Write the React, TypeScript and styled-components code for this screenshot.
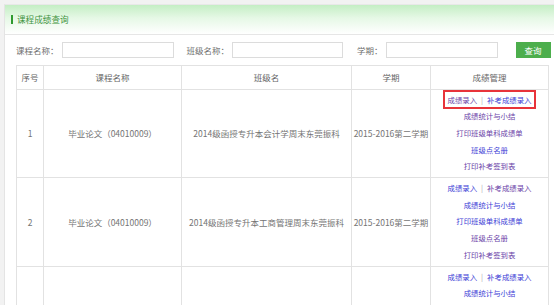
import React from 'react';
import styled, {createGlobalStyle} from 'styled-components';

const GlobalStyle = createGlobalStyle`
  html, body {
    margin: 0;
    padding: 0;
    background: #f2f2f2;
    overflow: hidden;
  }
  body {
    font-family: "Noto Sans CJK SC", "Noto Sans", sans-serif;
    color: #666;
  }
`;

interface IRow {
  no: number;
  course: string;
  klass: string;
  term: string;
}

const ROWS: IRow[] = [
  {no: 1, course: '毕业论文（04010009）', klass: '2014级函授专升本会计学周末东莞振科', term: '2015-2016第二学期'},
  {no: 2, course: '毕业论文（04010009）', klass: '2014级函授专升本工商管理周末东莞振科', term: '2015-2016第二学期'},
  {no: 3, course: '', klass: '', term: ''}
];

const LINKS = ['成绩统计与小结', '打印班级单科成绩单', '班级点名册', '打印补考签到表'];

const Panel = styled.div`
  margin: 4px 0 0 4px;
  height: 301px;
  background: #fff;
  border-left: 1px solid #e4e4e4;
  border-top: 1px solid #e8e8e8;
  overflow: hidden;
`;

const PanelHeader = styled.div`
  height: 29px;
  display: flex;
  align-items: center;
  padding: 0 0 0 6px;
  background: linear-gradient(to bottom, #c4eec4 0%, #e6f8e6 45%, #ffffff 100%);
  border-bottom: 1px solid #e6e6e6;
`;

const Title = styled.span`
  border-left: 2px solid #2f9a2f;
  padding-left: 4px;
  font-size: 8.6px;
  line-height: 9px;
  color: #3f943f;
`;

const SearchBar = styled.div`
  display: flex;
  align-items: center;
  padding: 7px 0 0 11px;
  height: 16px;
`;

const Label = styled.span<{$gap?: number}>`
  font-size: 8.5px;
  color: #6f6f6f;
  margin-left: ${p => p.$gap || 0}px;
  margin-right: 3px;
  white-space: nowrap;
`;

const Input = styled.input<{$w: number}>`
  box-sizing: border-box;
  width: ${p => p.$w}px;
  height: 16px;
  border: 1px solid #dcdcdc;
  padding: 0;
  margin: 0;
  outline: none;
`;

const Button = styled.button`
  margin-left: 18px;
  width: 35px;
  height: 16px;
  border: none;
  padding: 0;
  background: #4cae4c;
  color: #fff;
  font-family: inherit;
  font-size: 8.5px;
  cursor: pointer;
`;

const Table = styled.table`
  margin: 7px 0 0 11px;
  width: 532px;
  border-collapse: collapse;
  table-layout: fixed;
`;

const Th = styled.th`
  height: 22.5px;
  border: 1px solid #e2e2e2;
  font-weight: normal;
  font-size: 8.5px;
  color: #666;
  text-align: center;
  padding: 0;
`;

const Td = styled.td`
  height: 87.5px;
  border: 1px solid #e2e2e2;
  font-size: 8.5px;
  color: #747474;
  text-align: center;
  vertical-align: middle;
  padding: 0;
  white-space: nowrap;
`;

const LinkList = styled.div`
  display: flex;
  flex-direction: column;
  align-items: center;
`;

const LinkLine = styled.div`
  height: 16.6px;
  line-height: 16.6px;
  font-size: 7.4px;
`;

const Link = styled.a<{$visited?: boolean}>`
  color: ${p => (p.$visited ? '#6b3fa8' : '#3d3dd6')};
  text-decoration: none;
`;

const Sep = styled.span`
  color: #aaa;
  margin: 0 4px;
`;

const Marked = styled.span<{$marked?: boolean}>`
  outline: ${p => (p.$marked ? '2px solid #e8333a' : 'none')};
  outline-offset: 2px;
  padding: 0 1px;
`;

const Manage = ({marked, visited}: {marked?: boolean; visited: boolean[]}) => (
  <LinkList>
    <LinkLine>
      <Marked $marked={marked}>
        <Link href="#" $visited={visited[0]}>成绩录入</Link>
        <Sep>|</Sep>
        <Link href="#" $visited={visited[1]}>补考成绩录入</Link>
      </Marked>
    </LinkLine>
    {LINKS.map((name, i) => (
      <LinkLine key={name}>
        <Link href="#" $visited={visited[i + 2]}>{name}</Link>
      </LinkLine>
    ))}
  </LinkList>
);

const VISITED = [
  [true, false, true, true, false, true],
  [false, true, false, false, true, true],
  [false, false, false, false, false, false]
];

const App = () => (
  <>
    <GlobalStyle />
    <Panel>
      <PanelHeader>
        <Title>课程成绩查询</Title>
      </PanelHeader>
      <SearchBar>
        <Label>课程名称：</Label>
        <Input $w={112} />
        <Label $gap={13}>班级名称：</Label>
        <Input $w={111} />
        <Label $gap={14}>学期：</Label>
        <Input $w={112} />
        <Button>查询</Button>
      </SearchBar>
      <Table>
        <colgroup>
          <col style={{width: 27}} />
          <col style={{width: 138}} />
          <col style={{width: 170}} />
          <col style={{width: 79}} />
          <col style={{width: 118}} />
        </colgroup>
        <thead>
          <tr>
            <Th>序号</Th>
            <Th>课程名称</Th>
            <Th>班级名</Th>
            <Th>学期</Th>
            <Th>成绩管理</Th>
          </tr>
        </thead>
        <tbody>
          {ROWS.map((row, i) => (
            <tr key={row.no}>
              <Td>{row.course ? row.no : ''}</Td>
              <Td>{row.course}</Td>
              <Td>{row.klass}</Td>
              <Td>{row.term}</Td>
              <Td>
                <Manage marked={i === 0} visited={VISITED[i]} />
              </Td>
            </tr>
          ))}
        </tbody>
      </Table>
    </Panel>
  </>
);

export default App;
